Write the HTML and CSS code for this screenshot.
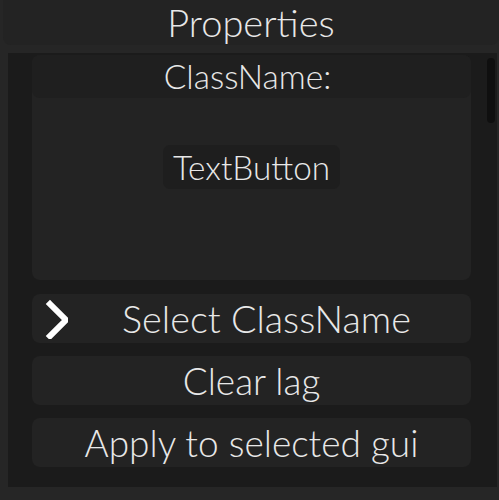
FILE: index.html
```html
<!DOCTYPE html>
<html>
<head>
<meta charset="utf-8">
<link rel="stylesheet" href="styles.css">
</head>
<body>
<div class="window">
  <div class="titlebar">Properties</div>
  <div class="content">
    <div class="card">
      <div class="card-header">ClassName:</div>
      <div class="card-body">
        <div class="chip">TextButton</div>
      </div>
    </div>
    <div class="btn btn-select">
      <svg class="chev" width="30" height="44" viewBox="0 0 30 44">
        <polyline points="12,9 28,25 12,41" fill="none" stroke="#ffffff" stroke-width="6" stroke-linecap="square" stroke-linejoin="miter"/>
      </svg>
      <span>Select ClassName</span>
    </div>
    <div class="btn">Clear lag</div>
    <div class="btn">Apply to selected gui</div>
    <div class="scrollbar"></div>
  </div>
  <div class="footer"></div>
</div>
</body>
</html>
```
FILE: styles.css
```css
html, body {
  margin: 0;
  padding: 0;
  background: #1d1d1d;
}
body {
  width: 499px;
  height: 500px;
  overflow: hidden;
  font-family: Lato, "Open Sans", sans-serif;
  font-weight: 300;
  color: #e8e8e8;
}
.window {
  width: 499px;
  height: 500px;
  background: #262626;
  display: flex;
  flex-direction: column;
}
.titlebar {
  height: 45px;
  margin: 0 0 0 3px;
  background: #232323;
  border-radius: 0 0 8px 8px;
  font-size: 38px;
  line-height: 44px;
  text-align: center;
}
.content {
  position: relative;
  margin: 8px 2px 0 8px;
  height: 434px;
  background: #1b1b1b;
  padding: 2px 0 0 24px;
  box-sizing: border-box;
  display: flex;
  flex-direction: column;
}
.card {
  width: 439px;
  height: 225px;
  background: #232323;
  border-radius: 8px;
  display: flex;
  flex-direction: column;
}
.card-header {
  height: 43px;
  background: #1f1f1f;
  border-radius: 8px;
  font-size: 33.5px;
  line-height: 43px;
  text-align: center;
  padding-right: 8px;
}
.card-body {
  display: flex;
  justify-content: center;
  padding-top: 47px;
}
.chip {
  height: 44px;
  padding: 0 10px;
  background: #1e1e1e;
  border-radius: 7px;
  font-size: 33.3px;
  line-height: 44px;
}
.btn {
  position: relative;
  width: 439px;
  height: 49px;
  margin-top: 14px;
  background: #232323;
  border-radius: 8px;
  font-size: 37px;
  line-height: 49px;
  text-align: center;
}
.btn + .btn {
  margin-top: 13px;
}
.btn-select {
  font-size: 37.8px;
  padding-left: 30px;
  box-sizing: border-box;
}
.chev {
  position: absolute;
  left: 6px;
  top: 1px;
}
.scrollbar {
  position: absolute;
  left: 479px;
  top: 5px;
  width: 8px;
  height: 65px;
  background: #0f0f0f;
  border-radius: 4px;
}
.footer {
  flex: 1;
}
```
